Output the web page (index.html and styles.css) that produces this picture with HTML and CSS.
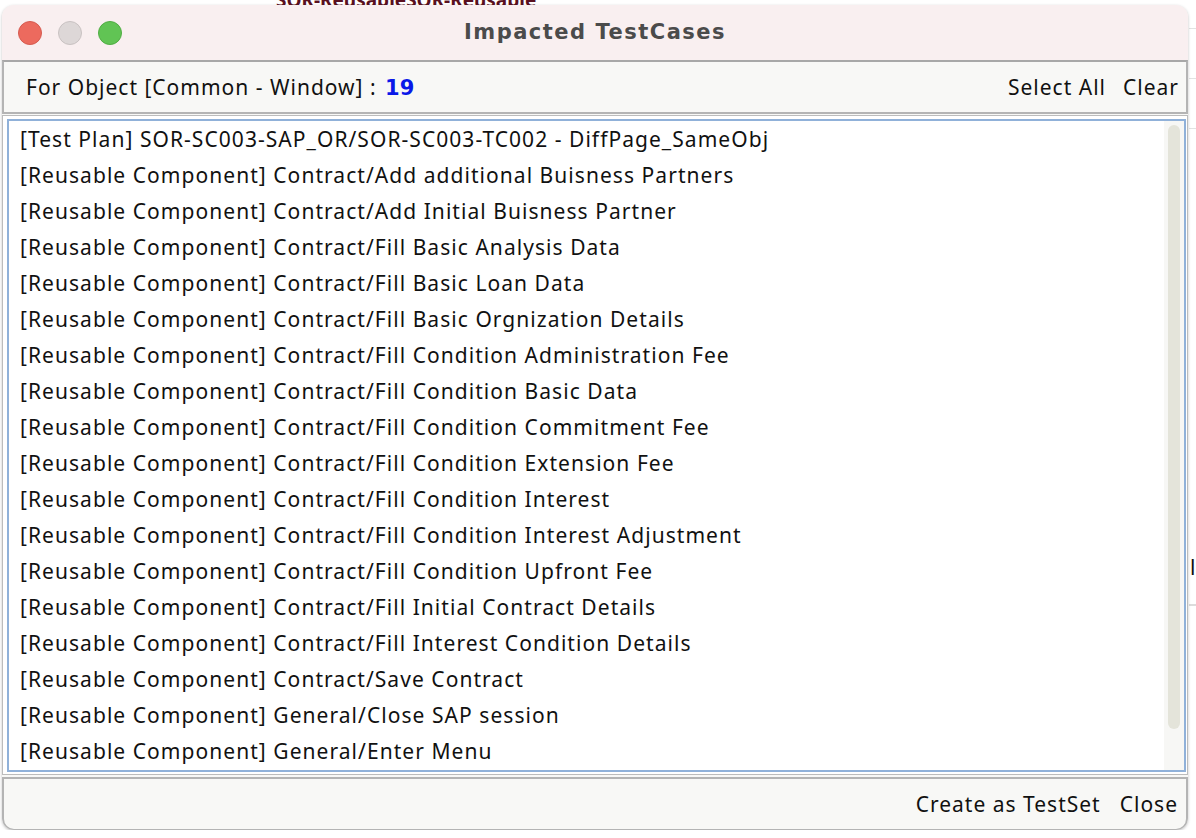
FILE: index.html
```html
<!DOCTYPE html>
<html>
<head>
  <title>Impacted TestCases</title>
  <link rel="stylesheet" href="styles.css">
</head>
<body>

  <div class="backdrop">
    <span class="behind-text">SOR-ReusableSOR-Reusable</span>
    <span class="behind-line l1"></span>
    <span class="behind-line l2"></span>
    <span class="behind-line l3"></span>
    <span class="behind-char">l</span>
    <span class="behind-line l4"></span>
  </div>

  <div class="window">
    <div class="titlebar">
      <div class="lights">
        <span class="light red"></span>
        <span class="light grey"></span>
        <span class="light green"></span>
      </div>
      <div class="title">Impacted TestCases</div>
    </div>

    <div class="toolbar">
      <div class="object-label">For Object [Common - Window] : <b class="count">19</b></div>
      <div class="actions">
        <span>Select All</span>
        <span>Clear</span>
      </div>
    </div>

    <div class="list-panel">
      <div class="list">
        <ul id="cases" class="cases"></ul>
        <div class="scrolltrack"><div class="thumb"></div></div>
      </div>
    </div>

    <div class="footer">
      <span>Create as TestSet</span>
      <span>Close</span>
    </div>
  </div>

  <script>
    const cases = [
      "[Test Plan] SOR-SC003-SAP_OR/SOR-SC003-TC002 - DiffPage_SameObj",
      "[Reusable Component] Contract/Add additional Buisness Partners",
      "[Reusable Component] Contract/Add Initial Buisness Partner",
      "[Reusable Component] Contract/Fill Basic Analysis Data",
      "[Reusable Component] Contract/Fill Basic Loan Data",
      "[Reusable Component] Contract/Fill Basic Orgnization Details",
      "[Reusable Component] Contract/Fill Condition Administration Fee",
      "[Reusable Component] Contract/Fill Condition Basic Data",
      "[Reusable Component] Contract/Fill Condition Commitment Fee",
      "[Reusable Component] Contract/Fill Condition Extension Fee",
      "[Reusable Component] Contract/Fill Condition Interest",
      "[Reusable Component] Contract/Fill Condition Interest Adjustment",
      "[Reusable Component] Contract/Fill Condition Upfront Fee",
      "[Reusable Component] Contract/Fill Initial Contract Details",
      "[Reusable Component] Contract/Fill Interest Condition Details",
      "[Reusable Component] Contract/Save Contract",
      "[Reusable Component] General/Close SAP session",
      "[Reusable Component] General/Enter Menu"
    ];

    const list = document.getElementById("cases");
    cases.forEach(c => {
      const li = document.createElement("li");
      li.innerText = c;
      list.appendChild(li);
    });
  </script>

</body>
</html>
```

FILE: styles.css
```css
body {
  margin: 0;
  background: #ffffff;
  font-family: "Noto Sans", "Open Sans", sans-serif;
  color: #111;
  overflow: hidden;
}

.backdrop {
  position: absolute;
  inset: 0;
  overflow: hidden;
}

.behind-text {
  position: absolute;
  left: 276px;
  top: -13px;
  font-size: 19px;
  font-weight: bold;
  color: #5a1020;
}

.behind-line {
  position: absolute;
  left: 1189px;
  width: 10px;
  height: 1px;
  background: #e2e2e2;
}

.l1 { top: 28px; }
.l2 { top: 78px; }
.l3 { top: 128px; }
.l4 { top: 604px; height: 2px; background: #dcdcdc; }

.behind-char {
  position: absolute;
  left: 1190px;
  top: 553px;
  font-size: 21px;
}

.window {
  position: relative;
  margin: 5px 0 0 2px;
  width: 1186px;
  height: 825px;
  border-radius: 12px;
  background: #f8f8f6;
  box-shadow: 0 1px 3px rgba(0, 0, 0, 0.25);
  display: flex;
  flex-direction: column;
  overflow: hidden;
}

.titlebar {
  height: 55px;
  flex: none;
  background: #f9eff0;
  display: flex;
  align-items: center;
  position: relative;
}

.lights {
  display: flex;
  gap: 16px;
  padding-left: 16px;
}

.light {
  width: 24px;
  height: 24px;
  border-radius: 50%;
  box-sizing: border-box;
}

.light.red { background: #ec6a5e; border: 1px solid #d65b50; }
.light.grey { background: #ddd7d7; border: 1px solid #c9c2c2; }
.light.green { background: #61c454; border: 1px solid #50ad43; }

.title {
  position: absolute;
  left: 0;
  right: 0;
  top: 15px;
  text-align: center;
  font-family: "DejaVu Sans", sans-serif;
  font-weight: bold;
  font-size: 21px;
  letter-spacing: 1.5px;
  color: #4b4b4b;
}

.toolbar {
  height: 50px;
  flex: none;
  border: 2px solid #b4b4b4;
  border-top-color: #a8a8a8;
  display: flex;
  align-items: center;
  justify-content: space-between;
  padding: 0 7px 0 22px;
  font-size: 21px;
  letter-spacing: 1px;
}

.count {
  color: #0a18e8;
  font-family: "DejaVu Sans", sans-serif;
  font-size: 21px;
  letter-spacing: 0;
  margin-left: 2px;
}

.actions {
  display: flex;
  gap: 17px;
}

.list-panel {
  margin-top: 1px;
  flex: none;
  height: 653px;
  border: 1px solid #bcbcbc;
  background: #ffffff;
  padding: 3px 1px 2px 4px;
}

.list {
  height: 100%;
  box-sizing: border-box;
  border: 2px solid #90b1d9;
  display: flex;
  background: #ffffff;
}

.cases {
  list-style: none;
  margin: 0;
  padding: 0 0 0 11px;
  flex: 1;
  font-size: 21px;
  letter-spacing: 1.05px;
}

.cases li {
  height: 36px;
  line-height: 36px;
  white-space: nowrap;
}

.scrolltrack {
  background: #f7f7f5;
  padding: 4px 4px 0 4px;
  box-sizing: border-box;
  width: 20px;
}

.thumb {
  height: 604px;
  background: #e4e4da;
  border-radius: 6px;
}

.footer {
  margin-top: 2px;
  height: 50px;
  flex: none;
  border: 2px solid #b4b4b4;
  border-radius: 0 0 12px 12px;
  display: flex;
  align-items: center;
  justify-content: flex-end;
  gap: 19px;
  padding-right: 8px;
  font-size: 21px;
  letter-spacing: 1px;
}
```
